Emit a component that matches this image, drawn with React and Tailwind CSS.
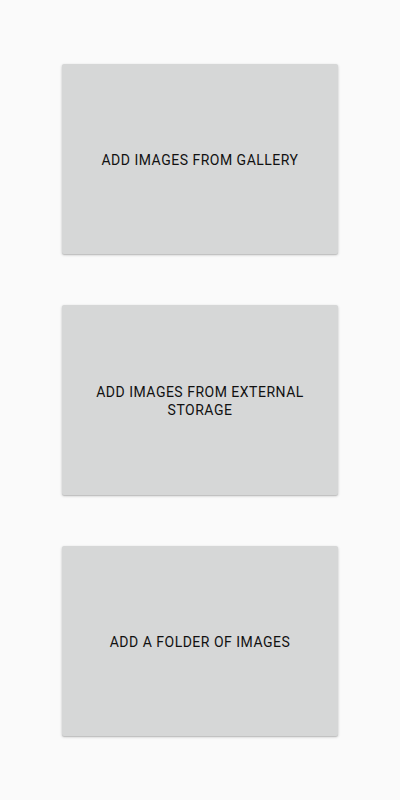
export default function App() {
  const items = [
    "ADD IMAGES FROM GALLERY",
    "ADD IMAGES FROM EXTERNAL STORAGE",
    "ADD A FOLDER OF IMAGES",
  ];
  return (
    <div
      className="w-[400px] h-[800px] bg-[#fafafa] flex flex-col items-center justify-center gap-[51px]"
      style={{ fontFamily: "Roboto, 'Liberation Sans', sans-serif" }}
    >
      {items.map((t) => (
        <button
          key={t}
          className="w-[276px] h-[190px] bg-[#d6d7d7] rounded-[2px] shadow-[0_1px_3px_rgba(0,0,0,0.2),0_1px_1px_rgba(0,0,0,0.12)] flex items-center justify-center px-8 pt-[2px] text-center text-[14px] leading-[18px] font-normal tracking-[0.5px] text-[#111111]"
        >
          {t}
        </button>
      ))}
    </div>
  );
}
